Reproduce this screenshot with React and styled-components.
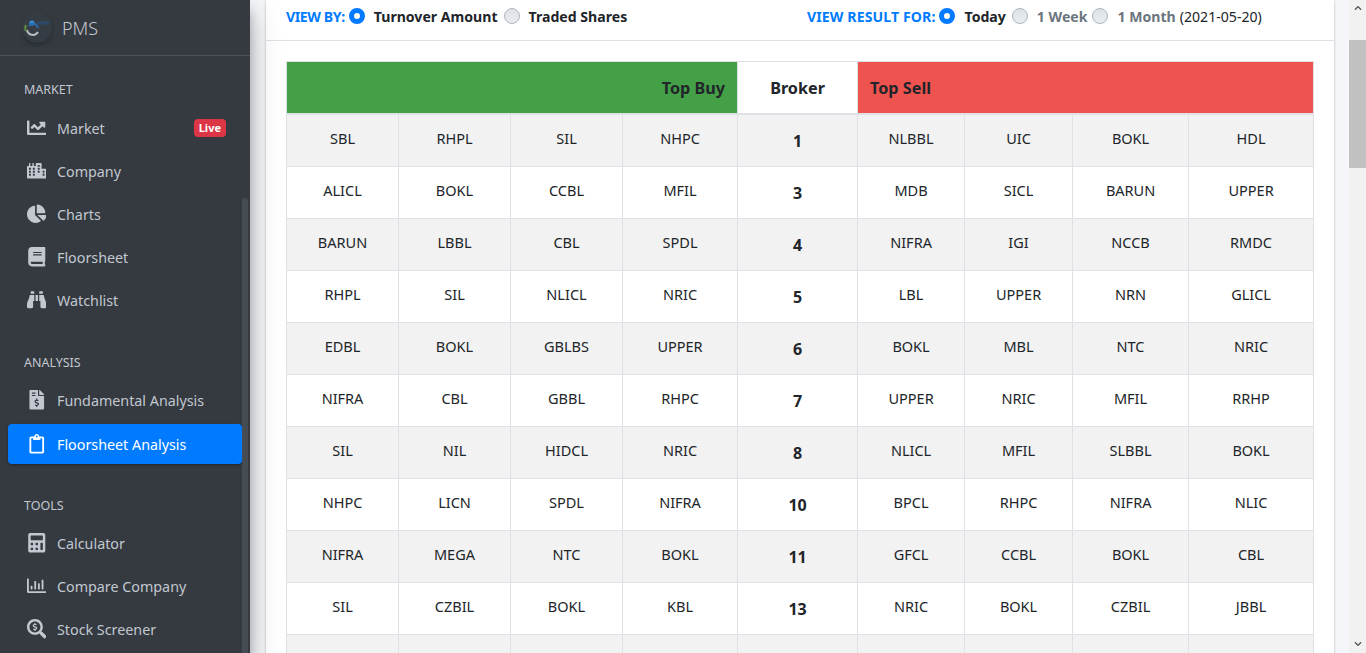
import React from "react";
import styled, { createGlobalStyle } from "styled-components";
import {
  FaChartLine,
  FaCity,
  FaChartPie,
  FaBook,
  FaBinoculars,
  FaFileInvoiceDollar,
  FaRegClipboard,
  FaCalculator,
  FaRegChartBar,
  FaSearchDollar,
  FaChevronUp,
  FaChevronDown,
} from "react-icons/fa";

const FONT = `"Noto Sans", "Open Sans", sans-serif`;

const MENU = [
  {
    title: "MARKET",
    top: 26,
    gap: 10,
    items: [
      { label: "Market", icon: FaChartLine, live: true },
      { label: "Company", icon: FaCity },
      { label: "Charts", icon: FaChartPie },
      { label: "Floorsheet", icon: FaBook },
      { label: "Watchlist", icon: FaBinoculars },
    ],
  },
  {
    title: "ANALYSIS",
    top: 35,
    gap: 9,
    items: [
      { label: "Fundamental Analysis", icon: FaFileInvoiceDollar },
      { label: "Floorsheet Analysis", icon: FaRegClipboard, active: true },
    ],
  },
  {
    title: "TOOLS",
    top: 34,
    gap: 9,
    items: [
      { label: "Calculator", icon: FaCalculator },
      { label: "Compare Company", icon: FaRegChartBar },
      { label: "Stock Screener", icon: FaSearchDollar },
    ],
  },
];

const COLUMNS = [112, 112, 112, 115, 120, 107, 108, 116, 125];

const ROWS = [
  [1, ["SBL", "RHPL", "SIL", "NHPC"], ["NLBBL", "UIC", "BOKL", "HDL"]],
  [3, ["ALICL", "BOKL", "CCBL", "MFIL"], ["MDB", "SICL", "BARUN", "UPPER"]],
  [4, ["BARUN", "LBBL", "CBL", "SPDL"], ["NIFRA", "IGI", "NCCB", "RMDC"]],
  [5, ["RHPL", "SIL", "NLICL", "NRIC"], ["LBL", "UPPER", "NRN", "GLICL"]],
  [6, ["EDBL", "BOKL", "GBLBS", "UPPER"], ["BOKL", "MBL", "NTC", "NRIC"]],
  [7, ["NIFRA", "CBL", "GBBL", "RHPC"], ["UPPER", "NRIC", "MFIL", "RRHP"]],
  [8, ["SIL", "NIL", "HIDCL", "NRIC"], ["NLICL", "MFIL", "SLBBL", "BOKL"]],
  [10, ["NHPC", "LICN", "SPDL", "NIFRA"], ["BPCL", "RHPC", "NIFRA", "NLIC"]],
  [11, ["NIFRA", "MEGA", "NTC", "BOKL"], ["GFCL", "CCBL", "BOKL", "CBL"]],
  [13, ["SIL", "CZBIL", "BOKL", "KBL"], ["NRIC", "BOKL", "CZBIL", "JBBL"]],
  ["", ["", "", "", ""], ["", "", "", ""]],
];

const Global = createGlobalStyle`
  html, body {
    margin: 0;
    height: 100%;
    overflow: hidden;
    font-family: ${FONT};
  }
`;

const Page = styled.div`
  display: flex;
  width: 1366px;
  height: 653px;
  overflow: hidden;
  background: #f4f6f9;
`;

const Sidebar = styled.aside`
  position: relative;
  flex: 0 0 250px;
  background: #343a40;
  box-shadow: 0 14px 28px rgba(0, 0, 0, 0.25), 0 10px 10px rgba(0, 0, 0, 0.22);
  z-index: 2;
`;

const Brand = styled.div`
  display: flex;
  align-items: center;
  height: 56px;
  padding-left: 20px;
  box-sizing: border-box;
  border-bottom: 1px solid #4b545c;
  color: #c2c7d0;
  font-size: 18px;
  font-weight: 300;
`;

const Logo = styled.svg`
  width: 34px;
  height: 36px;
  margin-right: 8px;
  margin-top: 2px;
`;

const Group = styled.div`
  padding: 0 8px;
  margin-top: ${(p) => p.$top}px;
`;

const GroupTitle = styled.div`
  padding-left: 16px;
  height: 16px;
  line-height: 16px;
  font-size: 12.5px;
  color: #c2c7d0;
  margin-bottom: ${(p) => p.$gap}px;
`;

const Item = styled.a`
  display: flex;
  align-items: center;
  height: 40px;
  margin-top: ${(p) => (p.$active ? 4 : 0)}px;
  margin-bottom: 3px;
  width: 234px;
  padding-left: 16px;
  padding-right: 16px;
  box-sizing: border-box;
  border-radius: 4px;
  font-size: 14.3px;
  color: ${(p) => (p.$active ? "#fff" : "#c2c7d0")};
  background: ${(p) => (p.$active ? "#007bff" : "transparent")};
  box-shadow: ${(p) => (p.$active ? "0 1px 3px rgba(0,0,0,.12), 0 1px 2px rgba(0,0,0,.24)" : "none")};
`;

const IconBox = styled.span`
  display: flex;
  justify-content: center;
  flex: 0 0 25px;
  margin-right: 8px;
  font-size: 19.5px;
`;

const LiveBadge = styled.span`
  margin-left: auto;
  background: #dc3545;
  color: #fff;
  font-size: 11px;
  font-weight: 700;
  line-height: 18px;
  height: 18px;
  padding: 0 5px;
  border-radius: 4px;
`;

const SideThumb = styled.div`
  position: absolute;
  right: 2px;
  top: 198px;
  bottom: 0;
  width: 6px;
  background: #454c53;
  border-radius: 3px 3px 0 0;
`;

const Main = styled.main`
  flex: 1;
  min-width: 0;
  padding: 0 15px 0 16px;
`;

const Card = styled.section`
  background: #fff;
  box-shadow: 0 0 1px rgba(0, 0, 0, 0.125), 0 1px 3px rgba(0, 0, 0, 0.2);
`;

const CardHeader = styled.div`
  display: grid;
  grid-template-columns: 521px 1fr;
  height: 41px;
  box-sizing: border-box;
  padding: 0 0 8px 20px;
  border-bottom: 1px solid #dee2e6;
`;

const Filters = styled.div`
  display: flex;
  align-items: center;
  font-size: 14.1px;
  font-weight: 700;
  color: #212529;
`;

const FilterLabel = styled.span`
  color: #007bff;
  margin-right: 4px;
  letter-spacing: ${(p) => p.$spacing}px;
`;

const Radio = styled.input.attrs({ type: "radio", readOnly: true })`
  appearance: none;
  width: 16px;
  height: 16px;
  margin: 0 9px 0 0;
  border-radius: 50%;
  box-sizing: border-box;
  border: 1px solid #adb5bd;
  background: linear-gradient(#dee2e6, #e9ecef);

  &:checked {
    border: 5px solid #007bff;
    background: #fff;
  }
`;

const Choice = styled.span`
  margin-right: ${(p) => p.$gap}px;
  color: ${(p) => (p.$muted ? "#6c757d" : "inherit")};
`;

const DateNote = styled.span`
  font-weight: 400;
  margin-left: 4px;
`;

const CardBody = styled.div`
  padding: 20px 20px 0;
`;

const Table = styled.table`
  width: 1027px;
  table-layout: fixed;
  border-collapse: collapse;
  color: #212529;
  font-size: 14.5px;

  tbody tr:first-child td {
    height: 53px;
  }

  tbody tr:first-child td:not(:nth-child(5)) {
    padding-bottom: 4px;
  }
`;

const Col = styled.col`
  width: ${(p) => p.$w}px;
`;

const Head = styled.th`
  height: 52px;
  padding: 1px 12px 0;
  box-sizing: border-box;
  font-size: 16.2px;
  font-weight: 700;
  text-align: ${(p) => p.$align};
  background: ${(p) => p.$bg};
  border: 1px solid #dee2e6;
  border-bottom-width: 2px;
`;

const Row = styled.tr`
  background: ${(p) => (p.$striped ? "#f2f2f2" : "#fff")};
`;

const Cell = styled.td`
  height: 52px;
  padding: 0 0 6px;
  box-sizing: border-box;
  text-align: center;
  border: 1px solid #dee2e6;
`;

const BrokerCell = styled(Cell)`
  padding: 1px 0 0;
  font-weight: 700;
  font-size: 16px;
`;

const Scrollbar = styled.div`
  position: relative;
  flex: 0 0 17px;
  background: #f1f1f1;
  display: flex;
  flex-direction: column;
  justify-content: space-between;
  align-items: center;
  padding: 4px 0 5px;
  box-sizing: border-box;
  color: #505050;
  font-size: 8px;
`;

const ScrollThumb = styled.div`
  position: absolute;
  left: 0;
  right: 0;
  top: 40px;
  height: 128px;
  background: #c1c1c1;
`;

function BrandLogo() {
  return (
    <Logo viewBox="0 0 34 36">
      <defs>
        <filter id="soft">
          <feGaussianBlur stdDeviation="0.5" />
        </filter>
        <filter id="halo">
          <feGaussianBlur stdDeviation="2" />
        </filter>
      </defs>
      <circle cx="17" cy="20" r="15" fill="#22262a" opacity="0.6" filter="url(#halo)" />
      <circle cx="17" cy="17" r="15" fill="#363c44" />
      <g filter="url(#soft)" fill="none">
        <circle cx="12" cy="12" r="2.6" fill="#2f8fe0" />
        <path d="M7 19a6 6 0 0 0 11 2" stroke="#b9bcbf" strokeWidth="2" />
        <path d="M6 14a6 6 0 0 0 0 6" stroke="#5b8a3c" strokeWidth="2" />
        <path d="M9 15a5 5 0 0 1 9 2" stroke="#2b6aa8" strokeWidth="2" />
        <path d="M17 12h12" stroke="#2d4a68" strokeWidth="3" />
      </g>
    </Logo>
  );
}

function Menu() {
  return MENU.map((group) => (
    <Group key={group.title} $top={group.top}>
      <GroupTitle $gap={group.gap}>{group.title}</GroupTitle>
      {group.items.map(({ label, icon: Icon, live, active }) => (
        <Item key={label} $active={active}>
          <IconBox>
            <Icon />
          </IconBox>
          {label}
          {live && <LiveBadge>Live</LiveBadge>}
        </Item>
      ))}
    </Group>
  ));
}

export default function App() {
  return (
    <Page>
      <Global />
      <Sidebar>
        <Brand>
          <BrandLogo />
          PMS
        </Brand>
        <Menu />
        <SideThumb />
      </Sidebar>
      <Main>
        <Card>
          <CardHeader>
            <Filters>
              <FilterLabel $spacing={-0.4}>VIEW BY:</FilterLabel>
              <Radio name="by" defaultChecked />
              <Choice $gap={6}>Turnover Amount</Choice>
              <Radio name="by" />
              <Choice>Traded Shares</Choice>
            </Filters>
            <Filters>
              <FilterLabel $spacing={0.1}>VIEW RESULT FOR:</FilterLabel>
              <Radio name="for" defaultChecked />
              <Choice $gap={6}>Today</Choice>
              <Radio name="for" />
              <Choice $gap={5} $muted>1 Week</Choice>
              <Radio name="for" />
              <Choice $muted>1 Month</Choice>
              <DateNote>(2021-05-20)</DateNote>
            </Filters>
          </CardHeader>
          <CardBody>
            <Table>
              <colgroup>
                {COLUMNS.map((w, i) => (
                  <Col key={i} $w={w} />
                ))}
              </colgroup>
              <thead>
                <tr>
                  <Head colSpan={4} $align="right" $bg="#43a047">Top Buy</Head>
                  <Head $align="center" $bg="#fff">Broker</Head>
                  <Head colSpan={4} $align="left" $bg="#ef5350">Top Sell</Head>
                </tr>
              </thead>
              <tbody>
                {ROWS.map(([broker, buy, sell], i) => (
                  <Row key={i} $striped={i % 2 === 0}>
                    {buy.map((name, j) => (
                      <Cell key={j}>{name}</Cell>
                    ))}
                    <BrokerCell>{broker}</BrokerCell>
                    {sell.map((name, j) => (
                      <Cell key={j}>{name}</Cell>
                    ))}
                  </Row>
                ))}
              </tbody>
            </Table>
          </CardBody>
        </Card>
      </Main>
      <Scrollbar>
        <FaChevronUp />
        <ScrollThumb />
        <FaChevronDown />
      </Scrollbar>
    </Page>
  );
}
